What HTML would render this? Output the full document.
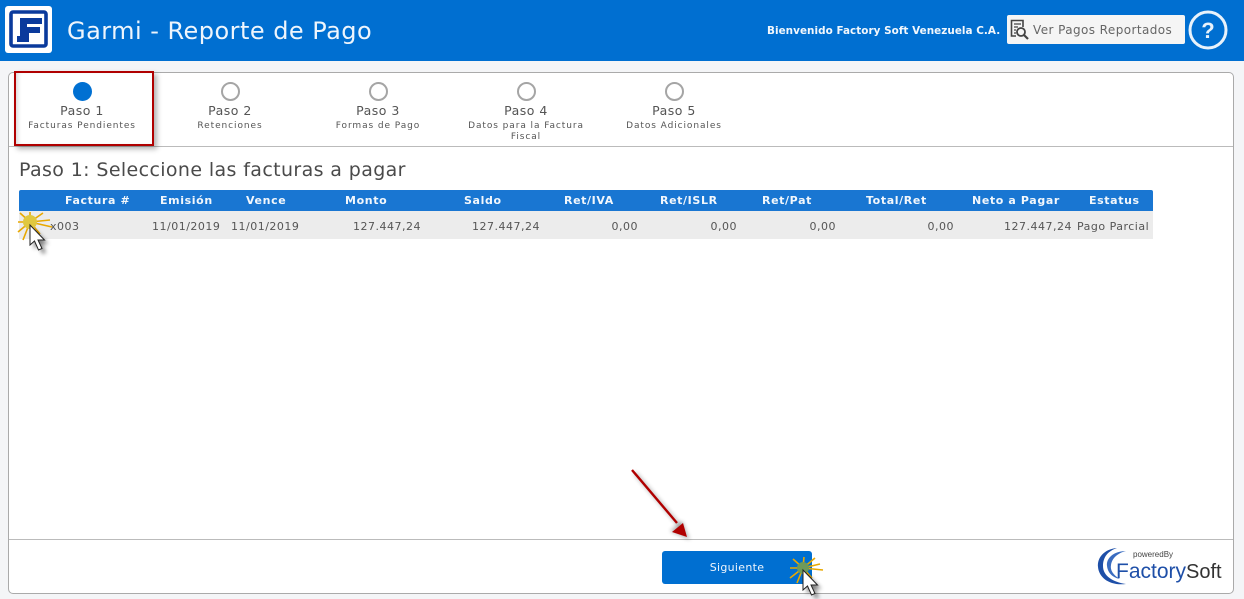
<!DOCTYPE html>
<html><head><meta charset="utf-8"><style>
html,body{margin:0;padding:0}
body{width:1244px;height:599px;position:relative;overflow:hidden;background:#f4f5f7;font-family:"DejaVu Sans","Liberation Sans",sans-serif;color:#555}
.t{position:absolute;white-space:nowrap;line-height:1}
.c{transform:translateX(-50%);text-align:center}
.r{transform:translateX(-100%)}
.h{font-weight:bold;font-size:11px;color:#f2f7fc;top:195px;letter-spacing:.62px}
.d{font-size:11px;color:#555;top:221px;letter-spacing:.5px}
.ring{position:absolute;top:82px;width:15px;height:15px;border:2px solid #a5a5a5;border-radius:50%;background:#fff}
.p{font-size:12.5px;top:105px;color:#555;letter-spacing:.5px}
.s{font-size:9px;color:#555;letter-spacing:.92px;top:122px}
</style></head><body>
<div style="position:absolute;left:0;top:0;width:1244px;height:61px;background:#006fd1"></div>
<svg style="position:absolute;left:5px;top:6px" width="48" height="47" viewBox="0 0 48 47">
<rect width="47" height="47" rx="3" fill="#fff"/>
<rect x="6" y="6" width="35" height="34" fill="none" stroke="#0a3a9c" stroke-width="3.600" rx="2"/>
<path d="M15 12H37V18H22V21H35V27H24V36H12V30H15Z" fill="#0a3a9c"/>
</svg>
<div class="t" style="left:67px;top:19px;font-size:24px;color:#eef5fc;letter-spacing:.47px">Garmi - Reporte de Pago</div>
<div class="t" style="left:767px;top:26px;font-size:10.4px;font-weight:bold;color:#f2f7fc;letter-spacing:.05px">Bienvenido Factory Soft Venezuela C.A.</div>
<div style="position:absolute;left:1007px;top:15px;width:178px;height:29px;background:#f5f5f5;border-radius:2px"></div>
<svg style="position:absolute;left:1010px;top:19px" width="20" height="22" viewBox="0 0 20 22" fill="none" stroke="#444">
<path d="M13 8V1.500H1.500V17H6" stroke-width="1.600"/><path d="M4 5H11M4 8H8M4 11H6M4 14H6" stroke-width="1.200"/>
<circle cx="11" cy="13" r="4" stroke-width="1.800"/><path d="M14 16L18 20" stroke-width="2.200"/></svg>
<div class="t" style="left:1033px;top:24px;font-size:12px;color:#666;letter-spacing:.42px">Ver Pagos Reportados</div>
<svg style="position:absolute;left:1188px;top:10px" width="40" height="40" viewBox="0 0 40 40">
<circle cx="20" cy="20" r="18" fill="none" stroke="#e8f2fb" stroke-width="3"/>
<text x="20" y="28" text-anchor="middle" font-family="Liberation Sans" font-weight="bold" font-size="22" fill="#e8f2fb">?</text></svg>

<div style="position:absolute;left:8px;top:72px;width:1224px;height:520px;background:#fff;border:1px solid #aaa;border-radius:5px"></div>
<div style="position:absolute;left:9px;top:146px;width:1224px;height:1px;background:#bbb"></div>
<div style="position:absolute;left:9px;top:539px;width:1224px;height:1px;background:#bbb"></div>

<div style="position:absolute;left:14px;top:71px;width:136px;height:71px;border:2px solid #b00000;box-shadow:3px 3px 5px rgba(0,0,0,.3),inset 4px 0 4px -2px rgba(0,0,0,.15)"></div>
<div style="position:absolute;left:73px;top:82px;width:19px;height:19px;border-radius:50%;background:#0070d2"></div>
<div class="ring" style="left:221px"></div><div class="ring" style="left:369px"></div><div class="ring" style="left:517px"></div><div class="ring" style="left:665px"></div>

<div class="t c p" style="left:82px">Paso 1</div><div class="t c p" style="left:230px">Paso 2</div><div class="t c p" style="left:378px">Paso 3</div><div class="t c p" style="left:526px">Paso 4</div><div class="t c p" style="left:674px">Paso 5</div>
<div class="t c s" style="left:82px">Facturas Pendientes</div>
<div class="t c s" style="left:230px">Retenciones</div>
<div class="t c s" style="left:378px">Formas de Pago</div>
<div class="t c s" style="left:526px">Datos para la Factura</div>
<div class="t c s" style="left:526px;top:133px">Fiscal</div>
<div class="t c s" style="left:674px">Datos Adicionales</div>

<div class="t" style="left:19px;top:161px;font-size:19px;color:#4a4a4a;letter-spacing:.38px">Paso 1: Seleccione las facturas a pagar</div>

<div style="position:absolute;left:19px;top:190px;width:1134px;height:21px;background:#1976d2;border-radius:2px 2px 0 0"></div>
<div style="position:absolute;left:19px;top:211px;width:1134px;height:28px;background:#ececec"></div>
<div class="t h" style="left:65px">Factura #</div>
<div class="t h" style="left:160px">Emisión</div>
<div class="t h" style="left:246px">Vence</div>
<div class="t h" style="left:345px">Monto</div>
<div class="t h" style="left:464px">Saldo</div>
<div class="t h" style="left:564px">Ret/IVA</div>
<div class="t h" style="left:660px">Ret/ISLR</div>
<div class="t h" style="left:762px">Ret/Pat</div>
<div class="t h" style="left:866px">Total/Ret</div>
<div class="t h" style="left:972px">Neto a Pagar</div>
<div class="t h" style="left:1089px">Estatus</div>

<div class="t d" style="left:50px">x003</div>
<div class="t d" style="left:152px">11/01/2019</div>
<div class="t d" style="left:231px">11/01/2019</div>
<div class="t d r" style="left:421px">127.447,24</div>
<div class="t d r" style="left:540px">127.447,24</div>
<div class="t d r" style="left:638px">0,00</div>
<div class="t d r" style="left:737px">0,00</div>
<div class="t d r" style="left:836px">0,00</div>
<div class="t d r" style="left:954px">0,00</div>
<div class="t d r" style="left:1072px">127.447,24</div>
<div class="t d" style="left:1077px">Pago Parcial</div>

<div style="position:absolute;left:662px;top:551px;width:150px;height:33px;background:#006fd1;border-radius:3px"></div>
<div class="t c" style="left:737px;top:562px;font-size:11px;color:#eef5fc;letter-spacing:.3px">Siguiente</div>

<svg style="position:absolute;left:0;top:0" width="1244" height="599" viewBox="0 0 1244 599">
<defs>
<filter id="b" x="-50%" y="-50%" width="200%" height="200%"><feGaussianBlur stdDeviation="2"/></filter>
<path id="cur" d="M0 0V20L4.500 16L8.500 25L12 23.500L8 15L14.500 15Z"/>
</defs>
<path d="M30 222L20 213M30 222L43 213M30 222L18 232M30 222L52 227M30 222L23 240M30 222L30 212M30 222L18 222M30 222L50 220M30 222L40 234" stroke="#e8a800" stroke-width="1.600"/>
<circle cx="30" cy="222" r="7" fill="#e0c840"/>
<use href="#cur" x="34" y="229" fill="#000" opacity=".5" filter="url(#b)"/>
<use href="#cur" x="30" y="225" fill="#fff" stroke="#222" stroke-width="1"/>
<path d="M632 470L678 524" stroke="#000" stroke-width="3" opacity=".3" filter="url(#b)" transform="translate(3 3)"/>
<path d="M687 537L667 528L679 518Z" fill="#000" opacity=".3" filter="url(#b)" transform="translate(3 3)"/>
<path d="M632 470L677 523" stroke="#b00000" stroke-width="2.400"/>
<path d="M687 537L672 532L683 523Z" fill="#b00000"/>
<path d="M803 568L793 559M803 568L815 558M803 568L790 578M803 568L823 570M803 568L797 583M803 568L804 557M803 568L790 568M803 568L820 564M803 568L812 578" stroke="#e8a800" stroke-width="1.600"/>
<circle cx="803" cy="568" r="6" fill="#6f9a5a"/>
<use href="#cur" x="807" y="574" fill="#000" opacity=".5" filter="url(#b)"/>
<use href="#cur" x="803" y="570" fill="#fff" stroke="#222" stroke-width="1"/>
<path d="M1117 548C1104 549 1097 558 1098 567C1099 578 1110 586 1126 584C1113 582 1103 576 1103 566C1103 557 1108 551 1117 548Z" fill="#1e4fa8"/>
<path d="M1126 551C1114 551 1106 558 1107 566C1108 574 1114 578 1120 579C1113 575 1110 570 1111 565C1112 558 1118 553 1126 551Z" fill="#3a6cc0"/>
<text x="1133" y="557" font-family="Liberation Sans" font-size="8" fill="#444">poweredBy</text>
<text x="1116" y="578" font-family="Liberation Sans" font-size="21" fill="#1e4fa8">Factory</text>
<text x="1186" y="578" font-family="Liberation Sans" font-size="20" fill="#333">Soft</text>
</svg>
</body></html>
